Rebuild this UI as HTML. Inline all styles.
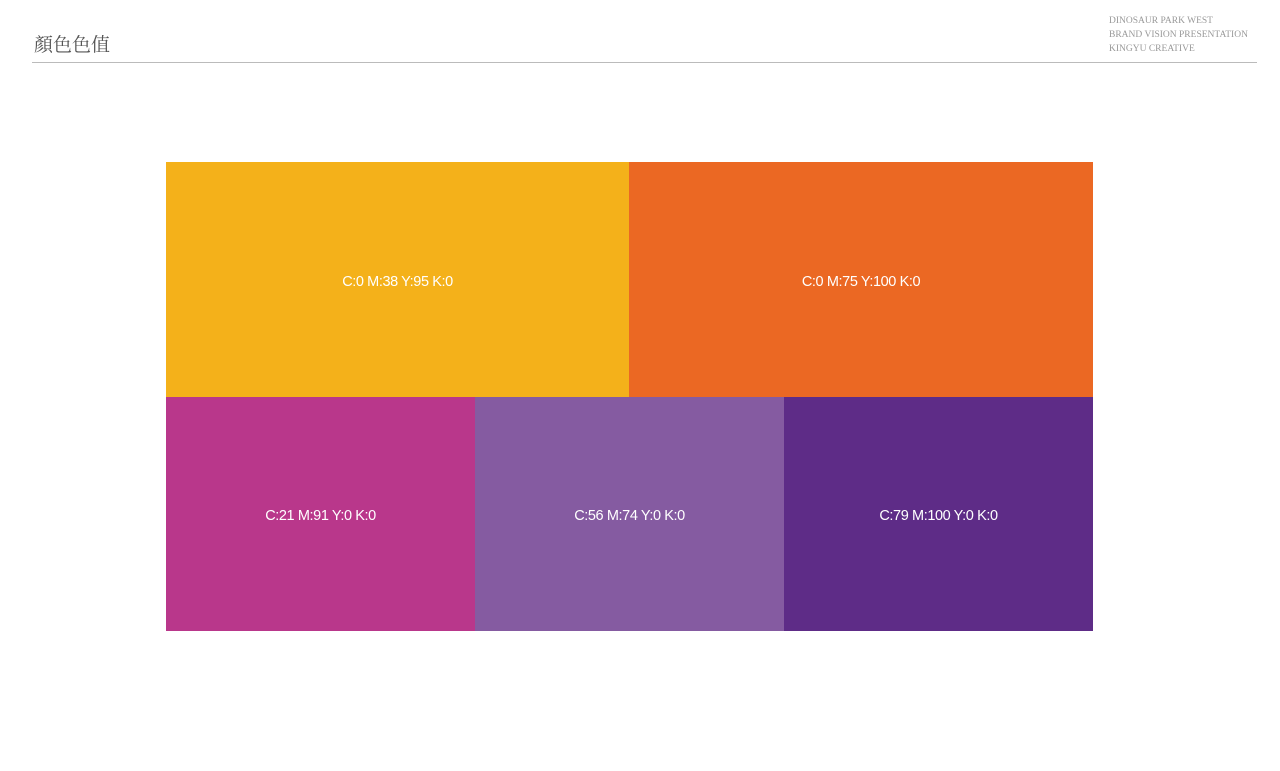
<!DOCTYPE html>
<html><head><meta charset="utf-8"><style>
body{margin:0;width:1280px;height:771px;background:#fff;position:relative;overflow:hidden;font-family:"Liberation Sans",sans-serif}
.t{position:absolute;left:34px;top:30px;font-family:"Liberation Serif","Noto Serif CJK SC",serif;font-size:19px;color:#555}
.r{position:absolute;left:1109px;top:14px;font-family:"Liberation Serif",serif;font-size:9.5px;line-height:14px;color:#999;white-space:nowrap}
.line{position:absolute;left:32px;top:62px;width:1225px;height:1px;background:#bbb}
.b{position:absolute;display:flex;align-items:center;justify-content:center;color:#fff;font-size:14.5px;letter-spacing:-0.4px;padding-top:4px;box-sizing:border-box}
</style></head><body>
<div class="t">顏色色值</div>
<div class="r">DINOSAUR PARK WEST<br>BRAND VISION PRESENTATION<br>KINGYU CREATIVE</div>
<div class="line"></div>
<div class="b" style="left:166px;top:162px;width:463px;height:235px;background:#f4b11a">C:0 M:38 Y:95 K:0</div>
<div class="b" style="left:629px;top:162px;width:464px;height:235px;background:#eb6823">C:0 M:75 Y:100 K:0</div>
<div class="b" style="left:166px;top:397px;width:309px;height:234px;background:#b9378b">C:21 M:91 Y:0 K:0</div>
<div class="b" style="left:475px;top:397px;width:309px;height:234px;background:#855ba1">C:56 M:74 Y:0 K:0</div>
<div class="b" style="left:784px;top:397px;width:309px;height:234px;background:#5e2c87">C:79 M:100 Y:0 K:0</div>
</body></html>
